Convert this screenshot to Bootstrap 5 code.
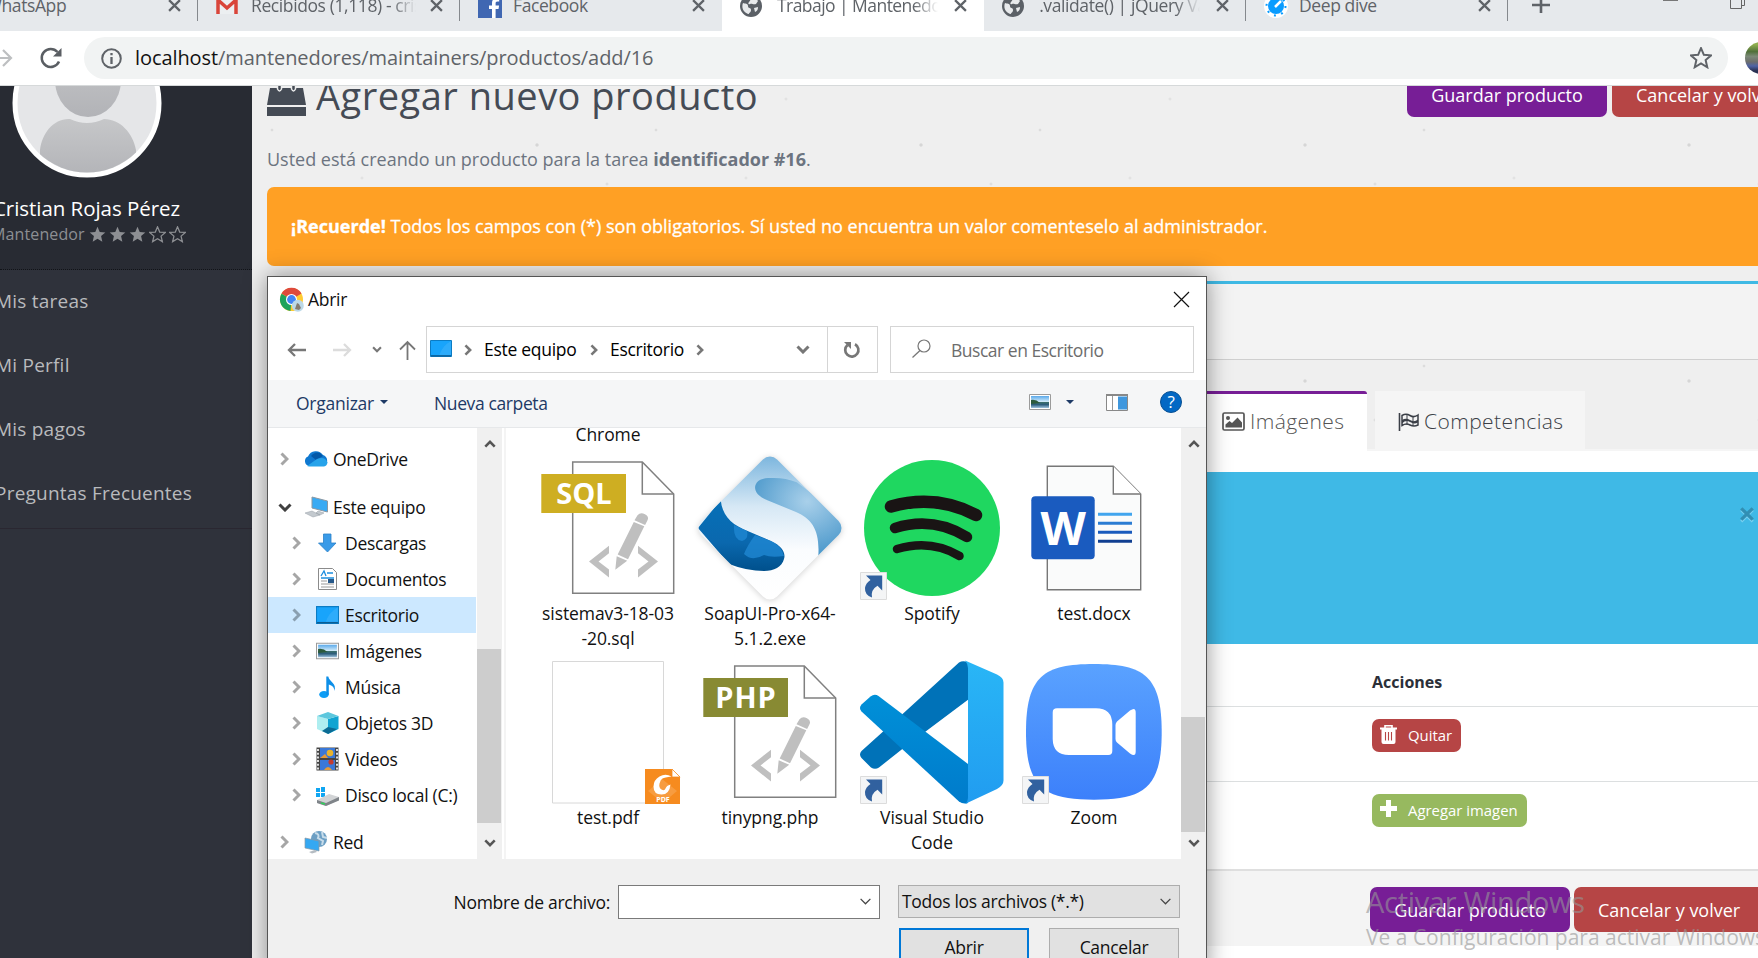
<!DOCTYPE html>
<html lang="es">
<head>
<meta charset="utf-8">
<meta name="viewport" content="width=device-width, initial-scale=1">
<title>Trabajo | Mantenedores</title>
<link href="https://cdn.jsdelivr.net/npm/bootstrap@5.3.0/dist/css/bootstrap.min.css" rel="stylesheet">
<style>
html,body{height:100%;overflow:hidden}
body{font-family:"Open Sans","Noto Sans",sans-serif;background:#fff}
svg{display:block;flex:none;overflow:visible}
.screen{width:1758px;height:958px}
.ln{white-space:nowrap}
/* browser chrome */
.tabstrip{height:31px;background:#e6e9ec;margin-left:-64px;width:1822px;flex:none}
.btab{width:262px;height:31px;flex:none;padding-left:18px;margin-top:-10px;color:#5f6368;font-size:17.5px;letter-spacing:-.4px}
.btab .ttl{width:165px;margin-left:11px;overflow:hidden;line-height:30px;position:relative;top:-1px}
.btab .fade-end{-webkit-mask-image:linear-gradient(90deg,#000 85%,transparent)}
.btab .cls{margin-left:auto;margin-right:17px}
.btab.sep{position:relative}
.btab.sep::after{content:"";position:absolute;right:0;top:10px;width:1.5px;height:21px;background:#85898d}
.activebg{background:#fff;margin-top:0;height:31px;letter-spacing:-.55px}
.activebg>svg,.activebg .ttl{position:relative;top:-10px}
.activebg .ttl{top:-11px}
.toolbar{height:55px;flex:none;border-bottom:1px solid #d6d9da;background:#fff}
.omni{height:42px;width:1644px;flex:none;margin-left:22px;background:#f1f3f3;border-radius:21px;padding:0 16px 0 17px;font-size:20px;color:#5f6368;letter-spacing:-.08px}
.omni b{font-weight:400;color:#111}
.profile{width:32px;height:32px;margin-left:17px;border-radius:50%;background:linear-gradient(#8fae4e 0 8%,#50703a 30%,#7c8a78 45%,#6c6d6c 62%,#4f63a5 75%,#2a3152 90%);flex:none}
/* sidebar */
.side{width:252px;background:#2f323b;flex:none;overflow:hidden}
.who{height:184px;background:#282b33;border-bottom:1px dotted #111318}
.ava{width:150px;height:150px;margin:-58px 0 0 12px;flex:none}
.nm{margin:15px 0 0 -7px;line-height:30px;font-size:20.5px;color:#fff;letter-spacing:-.05px}
.rl{margin-left:-9px;margin-top:-1px;line-height:24px;font-size:16px;color:#8d8f93;letter-spacing:.12px}
.mnu{border-bottom:1px solid #2a2731;height:259px}
.mnu a{height:64px;line-height:62px;margin-left:-5px;color:#b9babd;font-size:19px;letter-spacing:.22px;text-decoration:none;display:block}
/* page */
.pg{background-color:#efefef;background-image:radial-gradient(circle at 20px 44px,#dcdcdc 0 .8px,transparent 1.8px),radial-gradient(circle at 150px 13px,#e2e2e2 0 .8px,transparent 2px),radial-gradient(circle at 285px 59px,#d6d6d6 0 1px,transparent 2.2px),radial-gradient(circle at 110px 92px,#e2e2e2 0 .8px,transparent 2px),radial-gradient(circle at 355px 98px,#dfdfdf 0 .8px,transparent 2px);background-size:384px 118px;padding-left:15px;min-width:0;overflow:hidden}
.hd{height:45px;margin-top:-14px;flex:none}
.hd h1{font-size:38px;font-weight:400;color:#454b55;line-height:46px;margin:0 0 0 10px;letter-spacing:.5px}
.act{height:45px;line-height:46px;border:0;border-radius:7px;padding:0 24px;font-size:18px;color:#fff;white-space:nowrap;flex:none}
.act.g{background:#771e96;width:200px}.act.c{background:#b64545;width:190px}
.sub{font-size:18px;line-height:28px;margin:28px 0 14px;color:#6c7480;letter-spacing:-.01px}
.warn{height:79px;border-radius:7px 0 0 7px;background:#ffa024;color:#fff;padding-left:24px;font-size:18px;letter-spacing:.01px;-webkit-text-stroke:.3px #fff;flex:none}
.pnl{margin-top:15px;height:79px;background:#f3f3f3;border-top:3px solid #3fb9e4;border-bottom:1px solid #cfcfcf;flex:none}
.tbs{margin-top:31px;height:60px;flex:none;padding-left:933px;border-bottom:2px solid #f5f5f5}
.tb{height:60px;padding:0 20px 2px 22px;font-size:21px;color:#3b3f47;font-weight:300;letter-spacing:.42px;white-space:nowrap}
.tb.on{background:#fff;border-top:3px solid #771e96;border-radius:3px 3px 0 0;width:167px;color:#555}
.tb.off{background:#f5f5f5;margin-left:8px;width:210px;height:58px;padding:3px 0 0 23px}
.tc{background:#fff;padding-top:21px}
.info{height:172px;background:#3fb9e6}
.rw{display:grid;grid-template-columns:1105px 1fr;border-bottom:1px solid #dcdfe0}
.mini{height:33px;border:0;border-radius:7px;color:#fff;font-size:14.9px;padding:0 9px 0 8px}
.ft{height:77px;background:#f4f4f4;border-top:2px solid #dfdfdf;padding:16px 0 0 1103px}
/* file dialog */
.dlg{position:absolute;left:267px;top:276px;width:940px;height:700px;border:1px solid #555;background:#fff;box-shadow:0 0 22px rgba(0,0,0,.42);font-size:17.5px;color:#111;letter-spacing:-.28px}
.ttlb{height:47px;padding:0 17px 2px 12px}
.navb{height:56px;padding:2px 12px 7px 19px}
.bx{border:1px solid #d5d5d5;height:47px}
.cmd{height:48px;background:#f5f6f7;border-bottom:1px solid #e6e8ea;color:#1e3a66;padding:0 24px 0 28px}
.mid{height:431px}
.tree{width:209px;padding-top:13px;overflow:hidden}
.tree>div{height:36px;display:flex;align-items:center}
.lv1{padding-left:12px}.lv1 .ic{margin:0 5px 0 15px}
.lv2{padding-left:24px}.lv2 .ic{margin:0 6px 0 15px}
.sel{background:#cce8ff;margin-right:1px}
.ic{width:24px;height:24px}.lv2 .ic{width:23px}
.sb{width:25px;background:#f0f0f0;padding:12px 0}
.th{background:#cdcdcd;width:24px}
.files{display:grid;grid-template-columns:repeat(4,162px);grid-auto-rows:204px;padding-left:21px;overflow:hidden;letter-spacing:-.08px}
.fi{text-align:center;line-height:25px}
.fi svg{width:144px;height:144px;margin:0 auto}
.foot{background:#f0f0f0;height:130px;padding-top:26px}
.fld{border:1px solid #7a7a7a;background:#fff;width:262px;height:34px;margin-left:8px;padding-right:7px}
.slt{border:1px solid #adadad;background:#e1e1e1;width:282px;height:33px;margin-left:18px;padding:0 7px 0 3px;letter-spacing:-.3px}
.db{width:130px;height:38px;background:#e1e1e1;border:1px solid #adadad;text-align:center;line-height:36px}
.db.pri{border:2px solid #0078d7;line-height:34px;margin-right:20px}
.wm{position:absolute;left:1366px;top:881px;color:rgba(150,150,150,.62);white-space:nowrap;z-index:3}
.wm div{font-size:29px;line-height:42px;letter-spacing:-.3px}.wm p{font-size:21px;line-height:28px;margin:0}
</style>
</head>
<body>
<svg width="0" height="0" style="position:absolute">
<defs>
<linearGradient id="gZ" x2="0" y2="1"><stop stop-color="#5aa2ff"/><stop offset="1" stop-color="#3c80fb"/></linearGradient>
<linearGradient id="gS" x2="0" y2="1"><stop stop-color="#7cb6de"/><stop offset=".35" stop-color="#d6e8f5"/><stop offset=".65" stop-color="#fafcfe"/><stop offset="1" stop-color="#fff"/></linearGradient>
<radialGradient id="gS2" cx=".6" cy=".3" r=".7"><stop stop-color="#a9d0ea"/><stop offset="1" stop-color="#4b98cb"/></radialGradient>
<linearGradient id="gS3" x2="0" y2="1"><stop stop-color="#0670b8"/><stop offset=".6" stop-color="#0a68ae"/><stop offset="1" stop-color="#00508c"/></linearGradient>
<linearGradient id="gV" x2="0" y2="1"><stop stop-color="#29b6f6"/><stop offset="1" stop-color="#219cf0"/></linearGradient>
<linearGradient id="gV2" x2="0" y2="1"><stop stop-color="#0090d8"/><stop offset="1" stop-color="#007bcb"/></linearGradient>
<linearGradient id="gSky" x2="0" y2="1"><stop stop-color="#5aa9ea"/><stop offset=".5" stop-color="#d7eefa"/><stop offset=".52" stop-color="#3b6f6c"/><stop offset=".72" stop-color="#2c5d7c"/><stop offset="1" stop-color="#9fc4e0"/></linearGradient>
<linearGradient id="gU" x2="0" y2="1"><stop stop-color="#c6c7c9"/><stop offset="1" stop-color="#b2b3b7"/></linearGradient>
<symbol id="x12" viewBox="0 0 12 12"><path d="M1 1l10 10M11 1L1 11" stroke="#5f6368" stroke-width="2.1"/></symbol>
<symbol id="globe" viewBox="0 0 22 22"><circle cx="11" cy="11" r="11" fill="#5b6066"/><path d="M3 8c2 1 5 0 5 3s3 1 3 4-2 2-2 4c-5-1-8-6-6-11zM10 3c3-1 6 0 8 3l-2 3c-3 1-4-1-6 0s-2-1-1-2 2-2 1-4zM14 13l4-1c0 3-1 4-3 5z" fill="#e8eaec"/></symbol>
<symbol id="cr" viewBox="0 0 9 14"><path d="M1.5 1.5L7 7l-5.500 5.500" fill="none" stroke="currentColor" stroke-width="3"/></symbol>
<symbol id="cd" viewBox="0 0 14 9"><path d="M1.500 1.500L7 7l5.500-5.500" fill="none" stroke="currentColor" stroke-width="3"/></symbol>
<symbol id="ct" viewBox="0 0 14 9"><path d="M1.500 1L7 6.500l5.500-5.500" fill="none" stroke="#444" stroke-width="1.4"/></symbol>
<symbol id="desk" viewBox="0 0 22 17"><path d="M.5 .5h21v16H.5z" fill="#18a4fb" stroke="#0b7cc4"/><path d="M9 16Q12 6 21 1v15z" fill="#3db3fb" opacity=".6"/><path d="M1 15.800h20" stroke="#0a5d94" stroke-width="1.300"/></symbol>
<symbol id="pic" viewBox="0 0 22 16"><path d="M.5 .5h21v15H.5z" fill="#fff" stroke="#9b9b9b"/><path d="M2 2h18v12H2z" fill="url(#gSky)"/><path d="M2 6q5-1 9 3l-9 1z" fill="#2c5a3c"/></symbol>
<symbol id="star" viewBox="0 0 20 20"><path d="M10 1l2.600 6.100 6.600.5-5 4.300 1.500 6.500L10 15l-5.700 3.400 1.500-6.500-5-4.300 6.600-.5z"/></symbol>
<symbol id="page" viewBox="0 0 144 144"><path d="M36.700 6h69.600l31.400 32v99.300h-101z" fill="#fff" stroke="#808080" stroke-width="1.500"/><path d="M106.300 6v32h31.400" fill="none" stroke="#808080" stroke-width="1.500"/><g fill="#bfbfbf"><path d="M73 89.700v7.500l-10.500 8.200L73 113.500v8L53 105.500zM102 89.700v7.500l10.500 8.200-10.500 8.100v8l20-16z"/><path d="M79.300 113.700l1.400-13.500 10.500 4.600zM81.700 98.500L97.800 66l10.500 4.300L92 103.200zM98.500 64.300l3-5q3-3.500 7.500-1t2.400 6.200l-2.300 4.500z"/></g></symbol>
<symbol id="lnk" viewBox="0 0 27 28"><path d="M.5 .5h26v27H.5z" fill="#f4f5f6" stroke="#dcdcdc"/><path d="M6 3.500h16.200v15l-4.700-4.700q-7 4-5.500 11.800Q4.500 23 5 16q.7-4.800 5.500-8z" fill="#31619f"/></symbol>
</defs>
</svg>

<div class="screen position-relative overflow-hidden d-flex flex-column">
  <div class="tabstrip d-flex">
    <div class="btab sep d-flex align-items-center"><div class="ln ttl">&nbsp;&nbsp;&nbsp;&nbsp;&nbsp;WhatsApp</div><svg class="cls" width="13" height="13"><use href="#x12"/></svg></div>
    <div class="btab sep d-flex align-items-center"><svg width="22" height="18" viewBox="0 0 22 18"><path d="M1 1h20v16H1z" fill="#eceff1"/><path d="M2 17V3l9 8 9-8v14" fill="none" stroke="#d9453a" stroke-width="3.500"/></svg><div class="ln ttl fade-end" style="margin-left:13px">Recibidos (1,118) - cris</div><svg class="cls" width="13" height="13"><use href="#x12"/></svg></div>
    <div class="btab d-flex align-items-center"><svg width="24" height="24" viewBox="0 0 24 24"><path d="M0 0h24v24H0z" fill="#4067b2"/><path d="M14 24v-9h-3v-3.500h3V9c0-3.200 1.900-5 4.800-5l2.400.2v3.200h-1.700c-1.500 0-1.900.8-1.900 1.900v2.200h3.500L20.500 15h-2.900v9z" fill="#fff"/></svg><div class="ln ttl">Facebook</div><svg class="cls" width="13" height="13"><use href="#x12"/></svg></div>
    <div class="btab activebg d-flex align-items-center"><svg width="22" height="22"><use href="#globe"/></svg><div class="ln ttl fade-end">&nbsp;Trabajo | Mantenedores</div><svg class="cls" width="13" height="13"><use href="#x12"/></svg></div>
    <div class="btab sep d-flex align-items-center"><svg width="22" height="22"><use href="#globe"/></svg><div class="ln ttl fade-end">&nbsp;.validate() | jQuery Valid</div><svg class="cls" width="13" height="13"><use href="#x12"/></svg></div>
    <div class="btab sep d-flex align-items-center"><svg width="24" height="24" viewBox="0 0 24 24"><circle cx="12" cy="12" r="12" fill="#fff"/><circle cx="12" cy="12" r="9.500" fill="none" stroke="#0a9cff" stroke-width="2" stroke-dasharray="2 5.460"/><circle cx="12" cy="12" r="8" fill="#0a9cff"/><path d="M11 13l6-6" stroke="#fff" stroke-width="2.500"/></svg><div class="ln ttl">Deep dive</div><svg class="cls" width="13" height="13"><use href="#x12"/></svg></div>
    <div class="d-flex align-items-start flex-fill"><svg style="margin:-5px 0 0 24px" width="18" height="18" viewBox="0 0 18 18"><path d="M9 0v18M0 10h18" stroke="#5f6368" stroke-width="2.600"/></svg><svg style="margin-left:113px" width="15" height="2"><path d="M0 .5h15" stroke="#777"/></svg><svg style="margin:-3px 0 0 52px" width="15" height="13" viewBox="0 0 15 13"><path d="M.5 .5h11v11H.5zM11.500 8.500h3V0" fill="none" stroke="#666"/></svg></div>
  </div>
  <div class="toolbar d-flex align-items-center">
    <svg width="12" height="18" viewBox="0 0 12 18"><path d="M0 9h10M3 1l8 8-8 8" fill="none" stroke="#bdbfc1" stroke-width="2.200"/></svg>
    <svg width="22" height="22" viewBox="0 0 22 22" style="margin-left:28px"><path d="M19 14.500A9 9 0 1 1 17.500 5" fill="none" stroke="#5a5e63" stroke-width="2.500"/><path d="M21.500 1v8.500H13z" fill="#5a5e63"/></svg>
    <div class="omni d-flex align-items-center"><svg width="21" height="21" viewBox="0 0 21 21"><circle cx="10.500" cy="10.500" r="9.300" fill="none" stroke="#5f6368" stroke-width="2"/><path d="M10.500 9v7M10.500 5v2.300" stroke="#5f6368" stroke-width="2.300"/></svg><div class="ln flex-fill" style="margin-left:13px"><b>localhost</b>/mantenedores/maintainers/productos/add/16</div><svg width="22" height="22" fill="none" stroke="#5f6368" stroke-width="1.800"><use href="#star"/></svg></div>
    <div class="profile"></div>
  </div>
  <div class="d-flex flex-fill" style="min-height:0">
    <aside class="side">
      <div class="who d-flex flex-column">
        <svg class="ava" viewBox="0 0 150 150"><circle cx="75" cy="75" r="72" fill="#e5e6e8" stroke="#fff" stroke-width="5"/><clipPath id="cA"><circle cx="75" cy="75" r="69.500"/></clipPath><g clip-path="url(#cA)" fill="url(#gU)"><ellipse cx="76" cy="52" rx="33" ry="37"/><path d="M28 150V122c2-17 14-32 30-31q17 8 34 0c16 0 29 14 32 31v28z"/></g></svg>
        <div class="nm ln">Cristian Rojas Pérez</div>
        <div class="rl ln d-flex align-items-center"><span>Mantenedor</span><span class="d-flex ms-1" style="gap:3px"><svg width="17" height="17" fill="#8d8f93"><use href="#star"/></svg><svg width="17" height="17" fill="#8d8f93"><use href="#star"/></svg><svg width="17" height="17" fill="#8d8f93"><use href="#star"/></svg><svg width="17" height="17" fill="none" stroke="#8d8f93" stroke-width="1.500"><use href="#star"/></svg><svg width="17" height="17" fill="none" stroke="#8d8f93" stroke-width="1.500"><use href="#star"/></svg></span></div>
      </div>
      <nav class="mnu"><a class="ln">Mis tareas</a><a class="ln">Mi Perfil</a><a class="ln">Mis pagos</a><a class="ln">Preguntas Frecuentes</a></nav>
    </aside>
    <main class="pg flex-fill d-flex flex-column">
      <div class="hd d-flex">
        <svg width="39" height="45" viewBox="0 0 39 45"><path d="M3 16h33l3 17H0zM0 35h39v9H0z" fill="#454b55"/><path d="M10.500 10v7q2 4 4 0v-7M24.500 10v7q2 4 4 0v-7" fill="#454b55" stroke="#efefef" stroke-width="1.500"/></svg>
        <h1 class="ln">Agregar nuevo producto</h1>
        <button class="act g ms-auto">Guardar producto</button><button class="act c" style="margin-left:5px;margin-right:-44px">Cancelar y volver</button>
      </div>
      <div class="sub ln">Usted está creando un producto para la tarea <b>identificador #16</b>.</div>
      <div class="warn ln d-flex align-items-center"><span><b>¡Recuerde!</b> Todos los campos con (*) son obligatorios. Sí usted no encuentra un valor comenteselo al administrador.</span></div>
      <div class="pnl"></div>
      <div class="tbs d-flex">
        <div class="tb on d-flex align-items-center"><svg width="23" height="19" viewBox="0 0 23 19"><rect x="1" y="1" width="21" height="17" rx="1.500" fill="none" stroke="#555" stroke-width="1.700"/><circle cx="6" cy="6" r="2" fill="#555"/><path d="M3.500 15.500v-3l4-3.500 2.500 2 5.500-5.500 4.500 5v5z" fill="#555"/></svg><span style="margin-left:5px">Imágenes</span></div>
        <div class="tb off d-flex align-items-center"><svg width="21" height="18" viewBox="0 0 21 18"><path d="M1.500 0v18" stroke="#3b3f47" stroke-width="1.600"/><path d="M4 2.500q4-2.500 8 0t8-.5v10q-4 2-8 0t-8 .5z" fill="none" stroke="#3b3f47" stroke-width="1.500"/><path d="M4 7q4-2.500 8 0t8-.5v3q-4 2-8-.5t-8 1.500z" fill="#3b3f47"/><path d="M9 2v10M15 3v10" stroke="#3b3f47"/></svg><span style="margin-left:5px">Competencias</span></div>
      </div>
      <div class="tc flex-fill">
        <div class="info d-flex justify-content-end"><svg width="16" height="16" viewBox="0 0 14 14" style="margin:34px 3px 0 0"><path d="M2 3.500l10 10M12 3.500l-10 10" stroke="#77d0f0" stroke-width="2.500"/><path d="M2 2l10 10M12 2L2 12" stroke="#318fb3" stroke-width="2.800"/></svg></div>
        <div class="rw" style="height:63px"><span></span><b style="font-size:16px;line-height:24px;padding-top:26px;color:#2b2f38">Acciones</b></div>
        <div class="rw" style="height:75px"><span></span><div style="padding-top:12px"><button class="mini d-flex align-items-center" style="background:#b64545"><svg width="17" height="19" viewBox="0 0 17 19" style="margin:-3px 11px 0 0"><path d="M0 2.500h17v2H15.500V17q0 2-2 2h-10q-2 0-2-2V4.500H0z" fill="#fff"/><path d="M5 3V.8h7V3" fill="none" stroke="#fff" stroke-width="1.600"/><path d="M5.500 7v8.500M8.500 7v8.500M11.500 7v8.500" stroke="#b64545" stroke-width="1.100"/></svg>Quitar</button></div></div>
        <div class="rw border-0" style="height:87px"><span></span><div style="padding-top:12px"><button class="mini d-flex align-items-center" style="background:#97b95f"><svg width="17" height="17" viewBox="0 0 17 17" style="margin:-4px 11px 0 0"><path d="M6 0h5v6h6v5h-6v6H6v-6H0V6h6z" fill="#fff"/></svg>Agregar imagen</button></div></div>
        <div class="ft d-flex"><button class="act g">Guardar producto</button><button class="act c" style="margin-left:4px">Cancelar y volver</button></div>
      </div>
    </main>
  </div>

  <section class="dlg">
    <div class="ttlb d-flex align-items-center">
      <svg width="24" height="24" viewBox="0 0 24 24"><circle cx="11.500" cy="11.500" r="11.500" fill="#fc3"/><path d="M11.500 11.500L1.500 5.500a11.500 11.500 0 0 1 20 0z" fill="#de4a3c"/><path d="M11.500 11.500L1.500 5.700A11.500 11.500 0 0 0 10.500 23z" fill="#1ea35c"/><circle cx="11.500" cy="11.500" r="5.500" fill="#fff"/><circle cx="11.500" cy="11.500" r="4.400" fill="#4285f4"/><circle cx="17.800" cy="17.800" r="6" fill="#bcd9e8"/><path d="M15 21l2-6 2 1 2 4-2 2z" fill="#857c70"/></svg>
      <span style="margin-left:4px">Abrir</span><svg class="ms-auto" width="15" height="15" viewBox="0 0 15 15"><path d="M0 0l15 15M15 0L0 15" stroke="#111" stroke-width="1.200"/></svg>
    </div>
    <div class="navb d-flex align-items-center">
      <svg width="19" height="14" viewBox="0 0 19 14"><path d="M19 7H2M8 1L2 7l6 6" fill="none" stroke="#777" stroke-width="2.300"/></svg>
      <svg width="19" height="14" viewBox="0 0 19 14" style="margin-left:27px"><path d="M0 7h17M11 1l6 6-6 6" fill="none" stroke="#dcdcdc" stroke-width="2.300"/></svg>
      <svg width="10" height="7" style="margin-left:20px;color:#777"><use href="#cd"/></svg>
      <svg width="15" height="19" viewBox="0 0 15 19" style="margin:2px 11px 0 18px"><path d="M7.500 19V2M0 8.500L7.500 1 15 8.500" fill="none" stroke="#777" stroke-width="1.800"/></svg>
      <div class="bx d-flex align-items-center" style="width:452px;color:#777;padding-left:3px"><svg width="22" height="17" style="margin-top:-2px"><use href="#desk"/></svg><svg width="8" height="12" style="margin:0 12px"><use href="#cr"/></svg><span class="ln text-black" style="width:93px">Este equipo</span><svg width="8" height="12" style="margin:0 12px 0 13px"><use href="#cr"/></svg><span class="ln text-black" style="width:73px">Escritorio</span><svg width="8" height="12" style="margin-left:13px"><use href="#cr"/></svg><svg class="ms-auto" width="14" height="9" style="margin-right:17px"><use href="#cd"/></svg><div class="d-flex align-items-center justify-content-center" style="width:50px;height:45px;border-left:1px solid #d5d5d5"><svg width="17" height="17" viewBox="0 0 17 17"><path d="M11 3.200A6.600 6.600 0 1 1 3.500 4" fill="none" stroke="#777" stroke-width="2.700"/><path d="M0 1h7v7z" fill="#777"/></svg></div></div>
      <div class="bx d-flex align-items-center flex-fill" style="margin-left:12px;padding-left:21px;color:#6d6d6d"><svg width="19" height="19" viewBox="0 0 19 19" style="margin-top:-3px"><circle cx="12" cy="7" r="6" fill="none" stroke="#777" stroke-width="1.200"/><path d="M8 11.500L.5 18.500" stroke="#777" stroke-width="1.300"/></svg><span class="ln" style="margin-left:20px;letter-spacing:-.48px;padding-top:1px">Buscar en Escritorio</span></div>
    </div>
    <div class="cmd d-flex align-items-center">
      <span class="ln" style="width:84px;letter-spacing:-.25px">Organizar</span><svg width="8" height="4" viewBox="0 0 8 4" style="margin-top:-3px"><path d="M0 0h8L4 4z" fill="#1e3a66"/></svg><span class="ln" style="margin-left:46px;letter-spacing:-.38px">Nueva carpeta</span>
      <svg class="ms-auto" width="22" height="16" style="margin-top:-3px"><use href="#pic"/></svg><svg width="8" height="4" viewBox="0 0 8 4" style="margin:-3px 32px 0 15px"><path d="M0 0h8L4 4z" fill="#1e3a66"/></svg>
      <svg width="22" height="17" viewBox="0 0 22 17" style="margin-top:-2px"><path d="M.5 .5h21v16H.5z" fill="#fff" stroke="#888"/><path d="M6.500 2v14" stroke="#999"/><path d="M0 1h22" stroke="#888" stroke-width="2"/><path d="M12 2.500h9v13h-9z" fill="#3f97dd"/></svg>
      <svg width="22" height="22" viewBox="0 0 22 22" style="margin:-3px 0 0 32px"><circle cx="11" cy="11" r="10.500" fill="#0368c4" stroke="#064f93"/><text x="11" y="17" text-anchor="middle" font-size="17" fill="#fff">?</text></svg>
    </div>
    <div class="mid d-flex">
      <div class="tree">
        <div class="lv1" style="margin-bottom:12px"><svg width="9" height="14" color="#a6a6a6"><use href="#cr"/></svg><svg class="ic" viewBox="0 0 24 24"><path d="M5 19a5 5 0 0 1-1-9.500 8.500 8.500 0 0 1 15-1.500A6 6 0 0 1 20 19z" fill="#0f78d0"/><path d="M7 9q4-5 9-3l3 3-7 4z" fill="#0358a8"/><path d="M3 19l10-7q8-3 10.500 3.500Q23 19 20 19.500H5z" fill="#27a3ea"/></svg>OneDrive</div>
        <div class="lv1"><svg width="14" height="9" color="#404040" style="margin:0 -3px 0 -2px"><use href="#cd"/></svg><svg class="ic" viewBox="0 0 24 24"><path d="M8 2l15.500 4v11L8 13z" fill="#39aaf3" stroke="#8b98a3"/><path d="M14 16l6 2-4 2-4-2zM1 18l7-2 8 4-7 2z" fill="#c3c9ce" stroke="#979fa6" stroke-width=".5"/></svg>Este equipo</div>
        <div class="lv2"><svg width="9" height="14" color="#a6a6a6"><use href="#cr"/></svg><svg class="ic" viewBox="0 0 23 24"><path d="M7.500 3h7.500v9h5L11.500 21 2.500 12h5z" fill="#3a9be8" stroke="#2b80c8" stroke-width=".8"/></svg>Descargas</div>
        <div class="lv2"><svg width="9" height="14" color="#a6a6a6"><use href="#cr"/></svg><svg class="ic" viewBox="0 0 23 24"><path d="M2.500 1.500h14l4 4v17h-18z" fill="#fff" stroke="#8b8b8b"/><path d="M5 9l3-5 2 5M11 6h6M5 11h13" stroke="#1b8ee0" stroke-width="1.300" fill="none"/><path d="M12 12h6v4h-6z" fill="#27598a"/><path d="M5 14h6M5 17h13M5 20h13" stroke="#999"/></svg>Documentos</div>
        <div class="lv2 sel"><svg width="9" height="14" color="#8a9fb0"><use href="#cr"/></svg><svg class="ic"><use href="#desk"/></svg>Escritorio</div>
        <div class="lv2"><svg width="9" height="14" color="#a6a6a6"><use href="#cr"/></svg><svg class="ic"><use href="#pic"/></svg>Imágenes</div>
        <div class="lv2"><svg width="9" height="14" color="#a6a6a6"><use href="#cr"/></svg><svg class="ic" viewBox="0 0 23 24"><ellipse cx="8" cy="19.500" rx="4.800" ry="3.500" fill="#0d9df5"/><path d="M10.300 20V1.500h2c1 5.500 9 7 6 14.500 0-4-2-5.500-5.500-6.500v10z" fill="#0d8fe8"/></svg>Música</div>
        <div class="lv2"><svg width="9" height="14" color="#a6a6a6"><use href="#cr"/></svg><svg class="ic" viewBox="0 0 23 24"><path d="M1 5l11 3v15L1 18z" fill="#aeeef0"/><path d="M22.500 5L12 8v15l10.500-5z" fill="#10a4d2"/><path d="M1 5l11-4 10.500 4L12 8z" fill="#5cc7dd"/><path d="M12 16l9 2-9 5-6-3z" fill="#0b6b94"/></svg>Objetos 3D</div>
        <div class="lv2"><svg width="9" height="14" color="#a6a6a6"><use href="#cr"/></svg><svg class="ic" viewBox="0 0 23 24"><path d="M.5 .5h22v23H.5z" fill="#444"/><path d="M4 1h15v10H4zM4 13h15v10H4z" fill="#3a78d8"/><path d="M2 2v21M21 2v21" stroke="#eee" stroke-width="1.800" stroke-dasharray="2 1.700"/><circle cx="14" cy="6" r="3.300" fill="#e9b32c"/><circle cx="15" cy="15" r="2.600" fill="#c43a2f"/><path d="M4 11l5-4 3 4zM8 23q4-6 8 0z" fill="#e59a37"/></svg>Videos</div>
        <div class="lv2" style="margin-bottom:11px"><svg width="9" height="14" color="#a6a6a6"><use href="#cr"/></svg><svg class="ic" viewBox="0 0 23 24"><path d="M0 5h4v4H0zM5 4h4v5H5zM0 10h4v4H0zM5 10h4v4H5z" fill="#10a6f2"/><path d="M1 17l12-6 10 3v3l-13 6-9-3z" fill="#d2d4d6"/><path d="M1 17l9 3 13-6v3.500L10 23l-9-3z" fill="#7f8489"/><path d="M5 20l4 1" stroke="#2fd25c" stroke-width="1.500"/></svg>Disco local (C:)</div>
        <div class="lv1"><svg width="9" height="14" color="#a6a6a6"><use href="#cr"/></svg><svg class="ic" viewBox="0 0 24 24"><circle cx="15" cy="9" r="8" fill="#6c9fc4"/><path d="M11 3q5 1 3 5l5 3-1 4M18 2l1 5 4 1" stroke="#c7dcea" stroke-width="2" fill="none"/><path d="M1 8l14 3v10L1 18z" fill="#35a8f2" stroke="#8b98a3" stroke-width=".7"/><path d="M5 22l6-2 2 2-5 1.500z" fill="#b5bcc2"/></svg>Red</div>
      </div>
      <div class="sb d-flex flex-column align-items-center"><svg width="12" height="8" color="#555" style="transform:scaleY(-1)"><use href="#cd"/></svg><div class="th" style="height:174px;margin-top:201px;margin-right:1px"></div><svg class="mt-auto" width="12" height="8" color="#555"><use href="#cd"/></svg></div>
      <div style="width:4px;border-right:2px solid #f4f4f4"></div>
      <div class="flex-fill overflow-hidden"><div class="files" style="margin-top:-176px">
        <div class="fi"><div style="height:170px"></div>Chrome</div><i></i><i></i><i></i>
        <div class="fi"><svg viewBox="0 0 144 144"><use href="#page"/><path d="M5.300 18h84.700v39H5.300z" fill="#ceae22"/><text x="48" y="48" text-anchor="middle" font-weight="700" font-size="29" letter-spacing="0" fill="#fff">SQL</text></svg><div style="margin-top:1px">sistemav3-18-03<br>-20.sql</div></div>
        <div class="fi"><svg viewBox="0 0 144 144" style="filter:drop-shadow(0 1px 3px rgba(0,0,0,.18))"><clipPath id="cS"><rect x="18.500" y="18.500" width="107" height="107" rx="10" transform="rotate(45 72 72)"/></clipPath><g clip-path="url(#cS)"><path d="M0 0h144v144H0z" fill="url(#gS)"/><path d="M120.300 100C122 74 114 63 98 56L70 44.500C58 40 56 33 57.500 29 60 22 68 22 76 22q12 0 22.700 4.300L144 60v20z" fill="url(#gS2)"/><path d="M22.700 44C24 58 32 67 45 73l28 12c11 5 15 12 13 18-2 8-10 12-20 12q-17 0-35-7L0 72z" fill="url(#gS3)"/><path d="M36 69l13 6q2 8-5 10-9-1-8-16zM57 79l16 6q10 4 13 15-13 2-20-1-12 7-20-1 3-8 11-19z" fill="#1f87d2" opacity=".8"/></g></svg><div style="margin-top:1px">SoapUI-Pro-x64-<br>5.1.2.exe</div></div>
        <div class="fi"><svg viewBox="0 0 144 144"><circle cx="72" cy="72" r="68" fill="#1fd760"/><g fill="none" stroke="#191414" stroke-linecap="round"><path d="M31 50.500Q76 38 116 59" stroke-width="12.500"/><path d="M35 72Q73 60 107 81" stroke-width="10.500"/><path d="M37 93Q71 83 99.500 100" stroke-width="8.500"/></g><use href="#lnk" y="116" width="27" height="28"/></svg><div style="margin-top:1px">Spotify</div></div>
        <div class="fi"><svg viewBox="0 0 144 144"><path d="M25.300 10.300h66l27.400 27.700v95.700H25.300z" fill="#fafbfb" stroke="#777" stroke-width="1.400"/><path d="M91.300 10.300V38h27.400" fill="#fff" stroke="#777" stroke-width="1.400"/><rect x="9.300" y="40.300" width="63.400" height="63" rx="4" fill="#1a5bbf"/><text x="41.300" y="89" text-anchor="middle" font-weight="700" font-size="47" letter-spacing="0" fill="#fff">W</text><g stroke-width="3"><path d="M76 58.300h34" stroke="#41a5ee"/><path d="M76 67.300h34" stroke="#2b7cd3"/><path d="M76 76.300h34" stroke="#185abd"/><path d="M76 85.300h34" stroke="#103f91"/></g></svg><div style="margin-top:1px">test.docx</div></div>
        <div class="fi"><svg viewBox="0 0 144 144"><path d="M16.500 1.500h111v141.500h-111z" fill="#fff" stroke="#d8d8d8"/><path d="M109 109h26.500l8.500 8.500V144h-35z" fill="#f68b1f"/><path d="M136 109l8 8h-8z" fill="#fff" stroke="#f68b1f" stroke-width=".8"/><path d="M126 119l15 12-14 12-15-12z" fill="#fff" opacity=".15"/><path d="M135.500 116.500q-6-3.500-12 0t-6 10q0 8 8 8t9-10q-4 1-5 4t-4 1-2-6 3-5 9-2z" fill="#fff"/><text x="127" y="141.500" text-anchor="middle" font-weight="700" font-size="7" letter-spacing="0" fill="#fff">PDF</text></svg><div style="margin-top:1px">test.pdf</div></div>
        <div class="fi"><svg viewBox="0 0 144 144"><use href="#page"/><path d="M5.300 18h84.700v39H5.300z" fill="#888a33"/><text x="48" y="48" text-anchor="middle" font-weight="700" font-size="29" letter-spacing="1" fill="#fff">PHP</text></svg><div style="margin-top:1px">tinypng.php</div></div>
        <div class="fi"><svg viewBox="0 0 144 144"><path d="M42.300 54.300L99 2.500q4-2.500 9 0v37.200L42.300 89 19 107.500q-4 2.500-8 0L1.500 98q-3-3.500 0-7z" fill="#0072b8"/><path d="M1.500 51.500q-3-3.500 0-7l9-8q4-3 8-.5L108 104v39q-5 1.500-9-1.500z" fill="url(#gV2)"/><path d="M105 .5l32 14q6.500 3 6.500 8v98q0 5-6.500 8.500l-32 15q3-2 3-7V8q0-4-3-7.500z" fill="url(#gV)"/><use href="#lnk" y="116" width="27" height="28"/></svg><div style="margin-top:1px">Visual Studio<br>Code</div></div>
        <div class="fi"><svg viewBox="0 0 144 144"><path d="M72 4c50 0 67.700 12 67.700 68s-17.700 67.700-67.700 67.700S4 128 4 72 22 4 72 4z" fill="url(#gZ)"/><path d="M35 48.300h39q16 0 16.300 16V91q0 4-4 4H47q-16 0-16.300-16V52.500q0-4.200 4.300-4.200zM93.500 65q0-2 1.500-3.500l13-11q5.700-4 5.700 2v39q0 6-5.700 2l-13-11q-1.500-1.500-1.500-3.500z" fill="#fff"/><use href="#lnk" y="116" width="27" height="28"/></svg><div style="margin-top:1px">Zoom</div></div>
      </div></div>
      <div class="sb d-flex flex-column align-items-center"><svg width="12" height="8" color="#555" style="transform:scaleY(-1)"><use href="#cd"/></svg><div class="th" style="height:115px;margin-top:269px;margin-right:1px"></div><svg class="mt-auto" width="12" height="8" color="#555"><use href="#cd"/></svg></div>
    </div>
    <div class="foot">
      <div class="d-flex"><div class="ln text-end" style="width:342px;line-height:34px">Nombre de archivo:</div><div class="fld d-flex align-items-center justify-content-end"><svg width="13" height="8"><use href="#ct"/></svg></div><div class="slt d-flex align-items-center justify-content-between"><span class="ln">Todos los archivos (*.*)</span><svg width="13" height="8"><use href="#ct"/></svg></div></div>
      <div class="d-flex" style="padding:9px 0 0 631px"><div class="db pri">Abrir</div><div class="db">Cancelar</div></div>
    </div>
  </section>
  <div class="wm"><div>Activar Windows</div><p>Ve a Configuración para activar Windows.</p></div>
</div>
<script src="https://cdn.jsdelivr.net/npm/bootstrap@5.3.0/dist/js/bootstrap.bundle.min.js"></script>
</body>
</html>
